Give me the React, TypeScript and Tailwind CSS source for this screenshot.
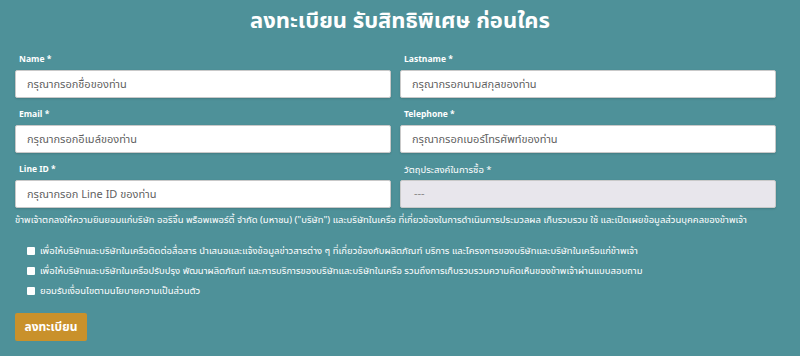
import React from "react";

const fields = [
  { label: "Name *", placeholder: "กรุณากรอกชื่อของท่าน" },
  { label: "Lastname *", placeholder: "กรุณากรอกนามสกุลของท่าน" },
  { label: "Email *", placeholder: "กรุณากรอกอีเมล์ของท่าน" },
  { label: "Telephone *", placeholder: "กรุณากรอกเบอร์โทรศัพท์ของท่าน" },
  { label: "Line ID *", placeholder: "กรุณากรอก Line ID ของท่าน" },
];

const consents = [
  "เพื่อให้บริษัทและบริษัทในเครือติดต่อสื่อสาร นำเสนอและแจ้งข้อมูลข่าวสารต่าง ๆ ที่เกี่ยวข้องกับผลิตภัณฑ์ บริการ และโครงการของบริษัทและบริษัทในเครือแก่ข้าพเจ้า",
  "เพื่อให้บริษัทและบริษัทในเครือปรับปรุง พัฒนาผลิตภัณฑ์ และการบริการของบริษัทและบริษัทในเครือ รวมถึงการเก็บรวบรวมความคิดเห็นของข้าพเจ้าผ่านแบบสอบถาม",
  "ยอมรับเงื่อนไขตามนโยบายความเป็นส่วนตัว",
];

function Field({ label, placeholder }: { label: string; placeholder: string }) {
  return (
    <div className="flex flex-col">
      <label className="h-[17px] pl-[4px] pt-[3px] text-[8.5px] font-bold leading-[14px] text-white">
        {label}
      </label>
      <input
        readOnly
        placeholder={placeholder}
        className="mt-[3px] h-[28px] rounded-[2px] border border-[#c9c9c9] bg-white px-[11px] text-[11px] text-[#555] shadow-[0_1px_2px_rgba(0,0,0,0.15)] outline-none placeholder:text-[#5f5f5f]"
      />
    </div>
  );
}

export default function App() {
  return (
    <div
      className="h-[356px] w-[800px] overflow-hidden bg-[#4e9199] text-white"
      style={{ fontFamily: '"Noto Sans Thai", "Noto Sans", "Liberation Sans", sans-serif' }}
    >
      <h1 className="pt-[6px] text-center text-[22px] font-bold leading-[32px]">
        ลงทะเบียน รับสิทธิพิเศษ ก่อนใคร
      </h1>

      <form className="pl-[15px] pr-[24px] pt-[12px]">
        <div className="grid grid-cols-2 gap-x-[9px] gap-y-[7px]">
          {fields.map((f) => (
            <Field key={f.label} {...f} />
          ))}
          <div className="flex flex-col">
            <label className="h-[17px] pl-[4px] pt-[3px] text-[9.5px] leading-[14px] text-white">
              วัตถุประสงค์ในการซื้อ *
            </label>
            <div className="mt-[3px] flex h-[28px] items-center rounded-[2px] border border-[#c9c9c9] bg-[#e8e6ec] px-[13px] text-[11px] text-[#888] shadow-[0_1px_2px_rgba(0,0,0,0.15)]">
              ---
            </div>
          </div>
        </div>

        <p className="mt-[5px] whitespace-nowrap text-[9.5px] leading-[14px] text-white">
          ข้าพเจ้าตกลงให้ความยินยอมแก่บริษัท ออริจิ้น พร็อพเพอร์ตี้ จำกัด (มหาชน) ("บริษัท") และบริษัทในเครือ ที่เกี่ยวข้องในการดำเนินการประมวลผล เก็บรวบรวม ใช้ และเปิดเผยข้อมูลส่วนบุคคลของข้าพเจ้า
        </p>

        <div className="mt-[17px] flex flex-col gap-[6px] pl-[12px]">
          {consents.map((c) => (
            <label key={c} className="flex h-[14px] items-center gap-[5px] text-[9.5px] leading-[14px]">
              <span className="inline-block h-[8px] w-[8px] shrink-0 rounded-[1px] bg-white" />
              <span>{c}</span>
            </label>
          ))}
        </div>

        <button
          type="button"
          className="mt-[15px] h-[28px] w-[72px] rounded-[2px] bg-[#c9912b] text-[12px] font-bold text-white"
        >
          ลงทะเบียน
        </button>
      </form>
    </div>
  );
}
